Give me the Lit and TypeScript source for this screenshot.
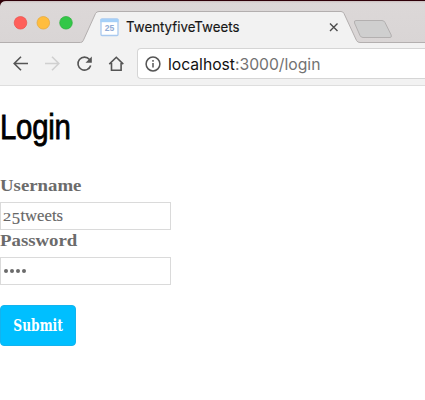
import { LitElement, html, css } from "lit";
import { customElement } from "lit/decorators.js";

@customElement("browser-chrome")
class BrowserChrome extends LitElement {
  static styles = css`
    :host { display: block; height: 86px; font-family: Inter, "Liberation Sans", sans-serif; }
    .strip { position: relative; height: 43px; box-sizing: border-box; border-top: 1px solid #2f0009; background: linear-gradient(#c9bfbf, #dcd8d8 2px, #d9d5d5); }
    .shape { position: absolute; left: 0; top: -1px; display: block; }
    .tab { position: relative; display: flex; align-items: center; height: 32px; padding: 10px 0 0 125.5px; color: #161616; }
    .title { width: 203px; font-size: 14px; line-height: 18px; white-space: nowrap; }
    .title span { display: inline-block; transform-origin: 0 50%; transform: scaleX(.95); -webkit-text-stroke: .15px #161616; }
    .bar { display: flex; height: 43px; box-sizing: border-box; background: #f2f2f2; border-bottom: 1px solid #dedede; }
    .tools { flex: none; width: 137px; height: 41px; }
    .address { flex: 1; display: flex; align-items: center; height: 31px; margin-top: 5px; box-sizing: border-box; border: 1px solid #d5d5d5; border-right: 0; border-radius: 4px 0 0 4px; background: #fff; padding-left: 7px; }
    .info { flex: none; width: 16px; height: 16px; }
    .url { margin-left: 7px; font-size: 16px; line-height: 22px; color: #727272; white-space: nowrap; transform-origin: 0 50%; transform: scaleX(.98); }
    .host { color: #111; }
  `;
  render() {
    return html`
      <div class="strip">
        <svg class="shape" width="425" height="43" viewBox="0 0 425 43">
          <path d="M0 1h6Q1 1 0 6Z" fill="#2f0009" />
          <circle cx="20.5" cy="22.8" r="6.3" fill="#ff5f5a" stroke="#e9504b" stroke-width=".7" />
          <circle cx="43.3" cy="22.8" r="6.3" fill="#ffbd3e" stroke="#e4a63b" stroke-width=".7" />
          <circle cx="66" cy="22.8" r="6.3" fill="#33c748" stroke="#2aad39" stroke-width=".7" />
          <path d="M0 42.5H80.5Q82.5 42.5 83.3 40.5L95.5 13.5Q96.5 11.5 99 11.5H341Q343 11.5 344 13.5L356.5 40.5Q357.5 42.5 360 42.5H425V44H0Z" fill="#f2f2f2" stroke="#b3afaf" />
          <path d="M356 20.5H382Q384 20.5 385 22.5L391.2 35Q392 37.5 390 37.5H363Q361 37.5 360 35.5L354.5 23Q353.8 20.5 356 20.5Z" fill="#cfcfcf" stroke="#b3b0b0" />
          <rect x="101" y="19" width="17" height="16.5" rx="1" fill="#fff" stroke="#a9c9ef" stroke-width="1.3" />
          <path d="M100.4 19h18v3.2h-18z" fill="#a5d0f8" />
          <text x="104.8" y="31" font-family="Liberation Sans, sans-serif" font-size="8.6" font-weight="700" fill="#91abd6" textLength="9.5">25</text>
          <path d="M330 23.5l7.5 7.5M337.5 23.5L330 31" stroke="#4b4b4b" stroke-width="1.4" />
        </svg>
        <div class="tab"><div class="title"><span>TwentyfiveTweets</span></div></div>
      </div>
      <div class="bar">
        <svg class="tools" viewBox="0 43 137 41" fill="none" stroke="#555" stroke-width="1.6">
          <path d="M28 63.5H14.5M21 56.7L14.2 63.5L21 70.3" />
          <path d="M45 63.5H58.5M52 56.7L58.8 63.5L52 70.3" stroke="#d0d0d0" />
          <path d="M89.5 59.5A6.5 6.5 0 1 0 90.7 65.5" />
          <path d="M91.8 56.5V62.8H85.5Z" fill="#555" stroke="none" />
          <path d="M109.3 64.1L116.3 57.3L123.3 64.1M111.5 63V70.3H121.1V63" />
        </svg>
        <div class="address">
          <svg class="info" viewBox="0 0 16 16" fill="none" stroke="#555" stroke-width="1.5"><circle cx="8" cy="8" r="6.9" /><path d="M8 7v4.5M8 4v1.7" /></svg>
          <div class="url"><span class="host">localhost</span>:3000/login</div>
        </div>
      </div>`;
  }
}

@customElement("app-root")
class AppRoot extends LitElement {
  static styles = css`
    :host { display: block; height: 400px; overflow: hidden; background: #fff; font-family: "Liberation Serif", serif; }
    .page { display: flex; flex-direction: column; align-items: flex-start; }
    h1 { margin: 21px 0 0; font: 400 35px/40px "Liberation Sans", sans-serif; color: #000; transform: scaleX(.84); transform-origin: 0 50%; -webkit-text-stroke: .8px #000; letter-spacing: -.3px; }
    label { font-weight: 700; font-size: 16px; line-height: 20px; color: #6b6b6b; transform: scaleX(1.175); transform-origin: 0 50%; }
    .user { margin-top: 29px; }
    .pass { height: 20px; margin-top: 1px; }
    .field { display: flex; align-items: center; width: 171px; height: 28px; box-sizing: border-box; border: 1px solid #dadada; padding-left: 2px; margin-top: 6px; color: #666; font-size: 16px; line-height: 20px; }
    .value { transform: scaleX(1.04); transform-origin: 0 50%; -webkit-text-stroke: .15px #666; white-space: nowrap; }
    .two { display: inline-block; font-size: 12.5px; transform: scaleX(1.25); transform-origin: 0 50%; width: 8.3px; }
    .five { display: inline-block; font-size: 16px; line-height: 16px; transform: translateY(2.5px); width: 8.5px; }
    .dots { gap: 1.8px; padding-left: 2.5px; }
    .dot { width: 4.3px; height: 4.3px; border-radius: 50%; background: #6b6b6b; }
    button { display: flex; align-items: center; justify-content: center; width: 76px; height: 41px; margin: 20px 0 0; padding: 0; border: 1px solid #13b3ee; border-radius: 4px; background: #00bfff; color: #fff; font: 700 16px/20px "DejaVu Serif Condensed", "DejaVu Serif", serif; }
    .caption { display: block; flex: none; transform: scaleX(.85); }
  `;
  render() {
    return html`
      <browser-chrome></browser-chrome>
      <div class="page">
        <h1>Login</h1>
        <label class="user">Username</label>
        <div class="field"><span class="value"><span class="two">2</span><span class="five">5</span>tweets</span></div>
        <label class="pass">Password</label>
        <div class="field dots">${[0, 1, 2, 3].map(() => html`<span class="dot"></span>`)}</div>
        <button><span class="caption">Submit</span></button>
      </div>`;
  }
}
